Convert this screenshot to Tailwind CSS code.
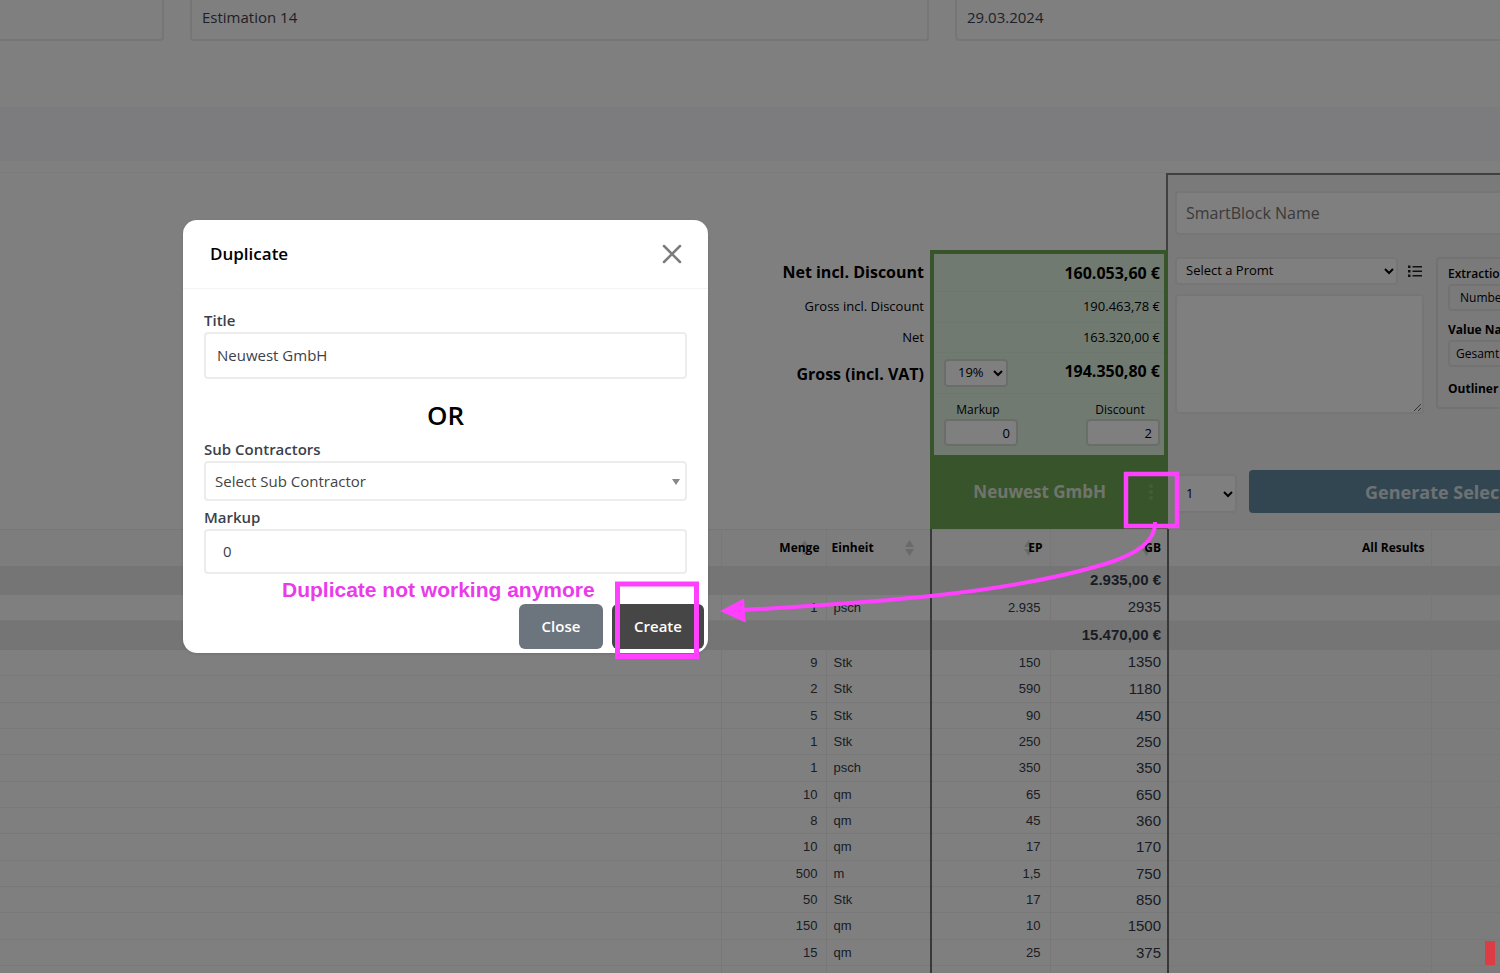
<!DOCTYPE html>
<html lang="en">
<head>
<meta charset="utf-8">
<title>Estimation 14</title>
<script src="https://cdn.jsdelivr.net/npm/@tailwindcss/browser@4"></script>
</head>
<body class="bg-white font-['Open_Sans','Noto_Sans',sans-serif] text-black">
<div class="relative h-screen overflow-hidden">
  <main class="isolate">
    <form class="grid grid-cols-[164px_1fr_545px] gap-x-[26px] text-[15px] text-[#41414f]">
      <input aria-label="Number" class="h-[41px] min-w-0 rounded-br border-r-2 border-b-2 border-[#ececec] px-3">
      <input aria-label="Estimation title" value="Estimation 14" class="h-[41px] min-w-0 rounded-b border-2 border-t-0 border-[#ececec] px-[10px] pb-[6px]">
      <input aria-label="Date" value="29.03.2024" class="h-[41px] min-w-0 rounded-bl border-b-2 border-l-2 border-[#ececec] px-[10px] pb-[6px]">
    </form>
    <div class="mt-[66px] h-[54px] bg-[#f8f8fc]"></div>

    <section class="mt-[11px] flex h-[357px] border-t border-[#f8f8f8]">
      <div class="mt-[80px] flex-1 pr-[6px] text-right">
        <div class="flex h-[38px] items-center justify-end text-base font-bold">Net incl. Discount</div>
        <div class="flex h-[31px] items-center justify-end text-[13px]">Gross incl. Discount</div>
        <div class="flex h-[31px] items-center justify-end text-[13px]">Net</div>
        <div class="flex h-[41px] items-center justify-end text-base font-bold">Gross (incl. VAT)</div>
      </div>

      <div class="relative z-10 mt-[77px] -mr-[2px] flex w-[238px] flex-col bg-[#70a854]">
        <div class="m-1 mb-0 bg-[#e2f4e2] text-right">
          <div class="flex h-[38px] items-center justify-end border-b border-[#dceedc] pr-1 text-base font-bold">160.053,60 €</div>
          <div class="flex h-[31px] items-center justify-end border-b border-[#dceedc] pr-1 text-[13px]">190.463,78 €</div>
          <div class="flex h-[30px] items-center justify-end border-b border-[#dceedc] pr-1 text-[13px]">163.320,00 €</div>
          <div class="flex h-[41px] items-start justify-between border-b border-[#dceedc] pt-[6px] pr-1 pl-[10px]">
            <div class="relative">
              <select aria-label="VAT" class="h-[28px] w-[64px] appearance-none rounded border-2 border-[#d4dcd4] bg-white pl-3 text-[13px]"><option>19%</option></select>
              <svg class="pointer-events-none absolute top-[11px] right-[5px]" width="10" height="7" viewBox="0 0 10 7" fill="none" stroke="#000" stroke-width="2"><path d="M1 1l4 4 4-4"/></svg>
            </div>
            <span class="text-base font-bold">194.350,80 €</span>
          </div>
          <div class="flex h-[61px] justify-between pt-2 pr-1 pl-[10px] text-center text-xs">
            <label class="block w-[74px]"><span class="block pr-[6px]">Markup</span><input value="0" class="mt-px block h-[27px] w-full rounded border-2 border-[#d4dcd4] bg-white px-[6px] text-right text-[13px]"></label>
            <label class="block w-[74px]"><span class="block pr-[6px]">Discount</span><input value="2" class="mt-px block h-[27px] w-full rounded border-2 border-[#d4dcd4] bg-white px-[6px] text-right text-[13px]"></label>
          </div>
        </div>
        <div class="flex flex-1 items-center justify-end gap-[42px] pr-[14px] text-[#e0e8dc]">
          <span class="text-[17px] font-bold">Neuwest GmbH</span>
          <button aria-label="More" class="h-6 w-[6px] text-[#8cb878]"><svg width="6" height="18" viewBox="0 0 6 18" fill="currentColor"><circle cx="3" cy="3" r="2"/><circle cx="3" cy="9" r="2"/><circle cx="3" cy="15" r="2"/></svg></button>
        </div>
      </div>

      <div class="flex w-[334px] flex-col overflow-hidden border-t-2 border-l-2 border-[#808080] bg-[#f5f5f5] pl-[7px]">
        <input aria-label="SmartBlock Name" placeholder="SmartBlock Name" class="mt-4 h-[44px] w-full shrink-0 rounded-l border-2 border-r-0 border-[#ececec] bg-white px-[9px] text-base placeholder:text-[#757575]">
        <div class="mt-[22px] flex h-[157px] shrink-0">
          <div class="flex w-[250px] shrink-0 flex-col">
            <div class="flex items-center gap-[10px]">
              <div class="relative">
                <select aria-label="Prompt" class="h-[28px] w-[223px] appearance-none rounded border-2 border-[#ececec] bg-white pl-[9px] text-[13px]"><option>Select a Promt</option></select>
                <svg class="pointer-events-none absolute top-[11px] right-[4px]" width="10" height="7" viewBox="0 0 10 7" fill="none" stroke="#000" stroke-width="2"><path d="M1 1l4 4 4-4"/></svg>
              </div>
              <button aria-label="List prompts"><svg width="14" height="12" viewBox="0 0 14 12" fill="#222"><path d="M0 .5h2.500v2.500H0zM0 5h2.500v2.500H0zM0 9.500h2.500v2.500H0zM4.500 1H14v1.500H4.500zM4.500 5.500H14v1.500H4.500zM4.500 10H14v1.500H4.500z"/></svg></button>
            </div>
            <textarea aria-label="Prompt text" class="mt-[9px] h-[120px] w-[249px] rounded border-2 border-[#ececec] bg-white"></textarea>
          </div>
          <div class="ml-[11px] h-[152px] flex-1 rounded-l border-2 border-r-0 border-[#e4e4e4] pt-[5px] pl-[10px] text-xs font-semibold whitespace-nowrap">
            <label class="block h-[20px] leading-5">Extraction Type<select class="block h-[27px] w-[120px] appearance-none rounded border-2 border-[#e4e4e4] pl-[10px] font-normal"><option>Number</option></select></label>
            <label class="mt-[36px] block h-[20px] leading-5 font-bold">Value Name<input value="Gesamt" class="block h-[27px] w-[120px] rounded border-2 border-[#e4e4e4] pl-[6px] font-normal"></label>
            <div class="mt-[39px] leading-5 font-bold">Outliner</div>
          </div>
        </div>
        <div class="mt-[56px] flex shrink-0">
          <div class="relative mt-1">
            <select aria-label="Count" class="h-[39px] w-[62px] appearance-none rounded border-2 border-[#ececec] bg-white pl-[9px] text-[13px]"><option>1</option></select>
            <svg class="pointer-events-none absolute top-[17px] right-[4px]" width="10" height="7" viewBox="0 0 10 7" fill="none" stroke="#000" stroke-width="2"><path d="M1 1l4 4 4-4"/></svg>
          </div>
          <button class="ml-3 h-[43px] flex-1 overflow-hidden rounded-l bg-[#648ca4] pl-[116px] text-left text-lg font-bold whitespace-nowrap text-[#dce4e8]">Generate Selected</button>
        </div>
      </div>
    </section>

    <table class="w-full table-fixed border-collapse font-['Liberation_Sans',Arial,sans-serif] text-[13px] text-[#333a48]">
      <colgroup><col><col class="w-[105px]"><col class="w-[105px]"><col class="w-[119px]"><col class="w-[118px]"><col class="w-[263px]"><col class="w-[69px]"></colgroup>
      <thead class="bg-[#fafafb] font-['Open_Sans','Noto_Sans',sans-serif] text-xs text-black">
        <tr class="h-[36px] border-t border-[#efefef]">
          <th></th>
          <th class="border-l border-[#f0f0f0] pr-[6px] text-right"><span class="relative isolate inline-block"><svg class="absolute top-0 right-[11px] -z-10" width="9" height="16" viewBox="0 0 9 16" fill="#d4d4d4"><path d="M4.500 0L9 7H0zM4.500 16L0 9h9z"/></svg>Menge</span></th>
          <th class="border-l border-[#f0f0f0] px-[5px] text-left"><span class="flex items-center justify-between pr-[11px]">Einheit<svg width="9" height="16" viewBox="0 0 9 16" fill="#d4d4d4"><path d="M4.500 0L9 7H0zM4.500 16L0 9h9z"/></svg></span></th>
          <th class="border-l-2 border-[#707070] pr-[7px] text-right"><span class="relative isolate inline-block"><svg class="absolute top-0 right-[10px] -z-10" width="9" height="16" viewBox="0 0 9 16" fill="#d4d4d4"><path d="M4.500 0L9 7H0zM4.500 16L0 9h9z"/></svg>EP</span></th>
          <th class="border-l border-[#f0f0f0] pr-[6px] text-right"><span class="relative isolate inline-block"><svg class="absolute top-0 right-[10px] -z-10" width="9" height="16" viewBox="0 0 9 16" fill="#d4d4d4"><path d="M4.500 0L9 7H0zM4.500 16L0 9h9z"/></svg>GB</span></th>
          <th class="border-l-2 border-[#707070] pr-[6px] text-right">All Results</th>
          <th class="border-l border-[#f0f0f0]"></th>
        </tr>
      </thead>
      <tbody id="rows"></tbody>
    </table>
  </main>

  <div class="absolute inset-0 bg-black/50"></div>

  <div role="dialog" aria-labelledby="dlg" class="absolute top-[220px] left-[183px] w-[525px] rounded-[14px] bg-white text-[15px] text-[#3c3f4a] shadow">
    <div class="flex h-[69px] items-center justify-between border-b border-[#f4f4f4] pr-[26px] pl-[27px]">
      <h2 id="dlg" class="text-[17px] font-semibold text-black">Duplicate</h2>
      <button aria-label="Dismiss"><svg width="20" height="20" viewBox="0 0 20 20" fill="none" stroke="#7c7c7c" stroke-width="2.500" stroke-linecap="round"><path d="M2 2l16 16M18 2L2 18"/></svg></button>
    </div>
    <div class="px-[21px] pt-[21px]">
      <label for="title" class="block leading-5 font-semibold">Title</label>
      <input id="title" value="Neuwest GmbH" class="mt-[2px] block h-[47px] w-full rounded border-2 border-[#ececec] px-[11px] pb-[2px]">
      <div class="mt-[18px] text-center text-[26px] leading-9 font-semibold text-black">OR</div>
      <label for="sub" class="mt-[6px] block leading-5 font-semibold">Sub Contractors</label>
      <div class="relative mt-[2px]">
        <select id="sub" class="block h-[40px] w-full appearance-none rounded border-2 border-[#ececec] px-[9px] text-[#444]"><option>Select Sub Contractor</option></select>
        <svg class="pointer-events-none absolute top-[18px] right-[7px]" width="8" height="6" viewBox="0 0 8 6" fill="#888"><path d="M0 0h8L4 6z"/></svg>
      </div>
      <label for="markup" class="mt-[6px] block leading-5 font-semibold">Markup</label>
      <input id="markup" value="0" class="mt-[2px] block h-[45px] w-full rounded border-2 border-[#ececec] px-[17px] pb-[2px]">
    </div>
    <div class="flex justify-end gap-[9px] pt-[30px] pr-1 pb-1 font-semibold text-white">
      <button class="h-[45px] w-[84px] rounded-md bg-[#6c757d]">Close</button>
      <button class="h-[45px] w-[92px] rounded-md bg-[#464646]">Create</button>
    </div>
  </div>

  <div class="pointer-events-none absolute top-[576px] left-[282px] font-['Liberation_Sans',Arial,sans-serif] text-[21px] leading-7 font-bold whitespace-nowrap text-[#e93bea]">Duplicate not working anymore</div>
  <svg class="pointer-events-none absolute top-0 left-0" width="1500" height="973" viewBox="0 0 1500 973" fill="none" stroke="#ff40ff">
    <rect x="617.500" y="584" width="79" height="72.500" stroke-width="5"/>
    <rect x="1126" y="474" width="51" height="52" stroke-width="4.500"/>
    <path d="M1155 522C1156 542 1135 555 1105 564C1012 592 890 602 742 610" stroke-width="4"/>
    <path d="M720 611L744 598.500L745.500 622.500Z" fill="#ff40ff" stroke="none"/>
  </svg>
  <div class="absolute top-[941px] right-[5px] h-6 w-[10px] bg-[#dc3c44]"></div>
</div>

<script>
const rows = [
  ['2.935,00 €'], ['1', 'psch', '2.935', '2935'], ['15.470,00 €'],
  ['9', 'Stk', '150', '1350'], ['2', 'Stk', '590', '1180'], ['5', 'Stk', '90', '450'],
  ['1', 'Stk', '250', '250'], ['1', 'psch', '350', '350'], ['10', 'qm', '65', '650'],
  ['8', 'qm', '45', '360'], ['10', 'qm', '17', '170'], ['500', 'm', '1,5', '750'],
  ['50', 'Stk', '17', '850'], ['150', 'qm', '10', '1500'], ['15', 'qm', '25', '375'], ['', '', '', '']
];
document.getElementById('rows').innerHTML = rows.map((r, i) => r.length === 1
  ? `<tr class="h-[29px] bg-[#ebebeb] text-[15px] leading-5 font-bold"><td colspan="3"></td><td class="border-l-2 border-[#707070]"></td><td class="pr-[6px] text-right">${r[0]}</td><td class="border-l-2 border-[#707070]"></td><td></td></tr>`
  : `<tr class="${i > 3 && i % 3 === 1 ? 'h-[27px]' : 'h-[26px]'} border-b border-[#f0f0f0]"><td></td><td class="border-l border-[#f0f0f0] pr-[8px] text-right">${r[0]}</td><td class="border-l border-[#f0f0f0] pl-[7px]">${r[1]}</td><td class="border-l-2 border-[#707070] pr-[9px] text-right">${r[2]}</td><td class="border-l border-[#f0f0f0] pr-[6px] text-right text-[15px] leading-5">${r[3]}</td><td class="border-l-2 border-l-[#707070] bg-[#f8f8f8]"></td><td class="border-l border-[#f0f0f0] bg-[#f8f8f8]"></td></tr>`
).join('');
</script>
</body>
</html>
